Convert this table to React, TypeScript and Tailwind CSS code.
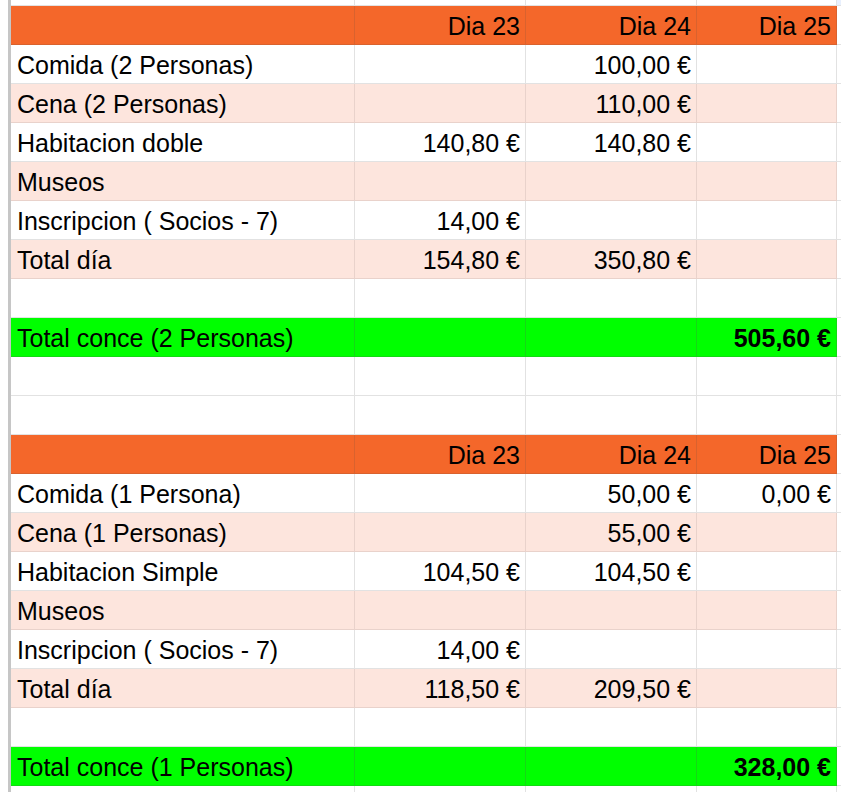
import React from "react";

type Kind = "header" | "white" | "pink" | "green" | "blank";

type Row = {
  kind: Kind;
  cells: string[];
};

const block = (n: string, persona: string, hab: string, v: string[][], total: string): Row[] => [
  { kind: "header", cells: ["", "Dia 23", "Dia 24", "Dia 25"] },
  { kind: "white", cells: [`Comida (${persona})`, "", v[0][0], v[0][1]] },
  { kind: "pink", cells: [`Cena (${n} Personas)`, "", v[1][0], ""] },
  { kind: "white", cells: [hab, v[2][0], v[2][1], ""] },
  { kind: "pink", cells: ["Museos", "", "", ""] },
  { kind: "white", cells: ["Inscripcion ( Socios - 7)", "14,00 €", "", ""] },
  { kind: "pink", cells: ["Total día", v[3][0], v[3][1], ""] },
  { kind: "blank", cells: ["", "", "", ""] },
  { kind: "green", cells: [`Total conce (${n} Personas)`, "", "", total] },
];

const rows: Row[] = [
  ...block(
    "2",
    "2 Personas",
    "Habitacion doble",
    [
      ["100,00 €", ""],
      ["110,00 €"],
      ["140,80 €", "140,80 €"],
      ["154,80 €", "350,80 €"],
    ],
    "505,60 €"
  ),
  { kind: "blank", cells: ["", "", "", ""] },
  { kind: "blank", cells: ["", "", "", ""] },
  ...block(
    "1",
    "1 Persona",
    "Habitacion Simple",
    [
      ["50,00 €", "0,00 €"],
      ["55,00 €"],
      ["104,50 €", "104,50 €"],
      ["118,50 €", "209,50 €"],
    ],
    "328,00 €"
  ),
];

const rowStyles: Record<Kind, string> = {
  header: "bg-[#f4672a] border-[#d9622e]",
  white: "bg-white border-[#e2e2e2]",
  pink: "bg-[#fde5dd] border-[#e9d2cb]",
  green: "bg-[#00ff00] border-[#14d914]",
  blank: "bg-white border-[#e2e2e2]",
};

const widths = ["w-[344px]", "w-[171px]", "w-[171px]", "w-[140px]"];

const App: React.FC = () => {
  return (
    <div
      className="flex w-[841px] h-[792px] overflow-hidden bg-white text-black text-[25px] leading-none"
      style={{ fontFamily: '"Liberation Sans", Arial, sans-serif' }}
    >
      <div className="w-[8px] shrink-0 bg-white" />
      <div className="w-[3px] shrink-0 bg-[#c6c6c6]" />
      <div className="flex-1 flex flex-col">
        {/* partial row above */}
        <div className="flex h-[6px] shrink-0 border-b border-[#e2e2e2]">
          {widths.map((w, i) => (
            <div key={i} className={`${w} shrink-0 border-r border-[#e2e2e2]`} />
          ))}
          <div className="flex-1 bg-[#e8f0fe]" />
        </div>

        {rows.map((row, r) => (
          <div key={r} className="flex h-[39px] shrink-0">
            {row.cells.map((c, i) => (
              <div
                key={i}
                className={`${widths[i]} shrink-0 flex items-center border-r border-b pl-[6px] pr-[5px] pt-[3px] ${rowStyles[row.kind]} ${
                  i === 0 ? "justify-start" : "justify-end"
                } ${row.kind === "green" && i === 3 ? "font-bold" : ""}`}
              >
                <span className="whitespace-nowrap">{c}</span>
              </div>
            ))}
            <div className="flex-1 border-b border-[#e2e2e2] bg-white" />
          </div>
        ))}

        {/* partial row below */}
        <div className="flex h-[10px] shrink-0">
          {widths.map((w, i) => (
            <div key={i} className={`${w} shrink-0 border-r border-[#e2e2e2]`} />
          ))}
        </div>
      </div>
    </div>
  );
};

export default App;
